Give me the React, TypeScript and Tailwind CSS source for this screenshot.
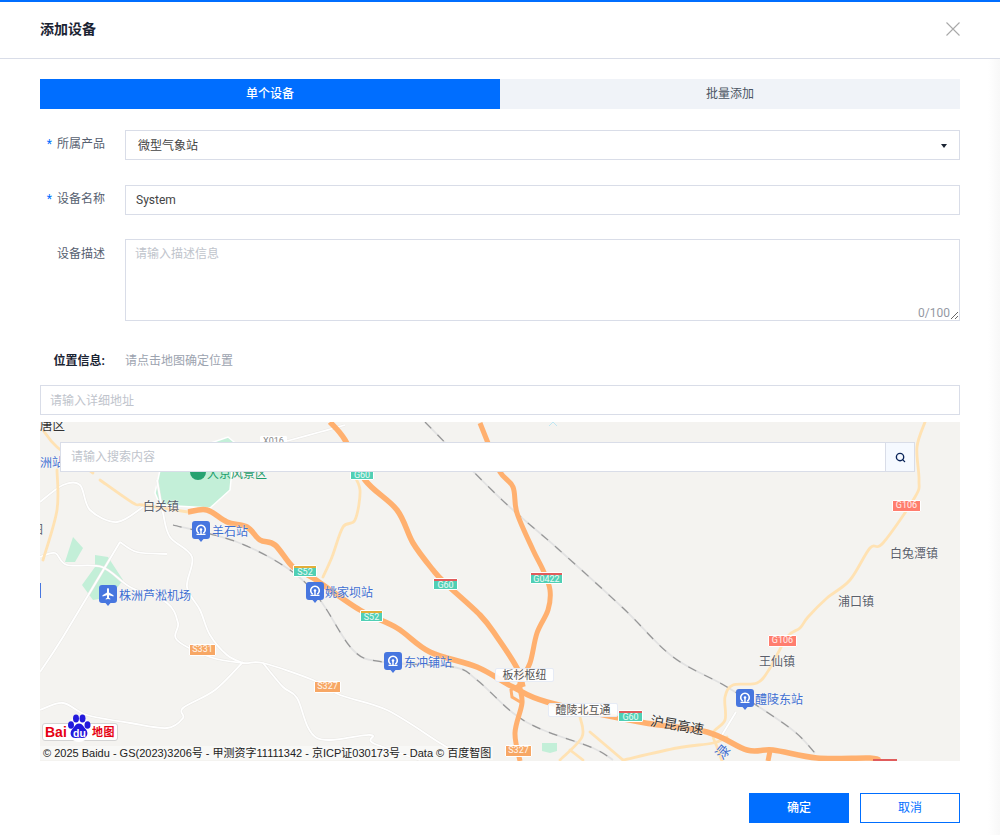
// App.tsx
import { Search } from 'lucide-react';

const roadA = '330,422 345,440 365,480 397,510 413,543 433,570 445,583 480,615 497,637 517,668 523,687';
const roadB =
  '188,512 207,510 227,522 247,527 260,540 275,545 293,567 313,578 360,610 397,628 430,652 477,667 513,687 547,702 640,722 707,732 747,750 773,750 817,758 870,758 880,761';
const roadC =
  '480,423 488,443 500,472 513,487 517,513 533,550 543,570 550,590 548,610 537,633 530,663 520,683 522,703 515,733 520,761';

const paleRoads = [
  '925,422 917,447 919,480 915,497 883,543 870,548 850,580 827,598 808,617 800,628 787,637 770,668 757,683 733,685 725,697 725,720 713,733 717,747 722,761',
  '352,472 360,490 355,520 343,527 332,557 323,577',
  '43,430 57,447 93,473',
  '100,480 133,503 143,505 188,512',
  '57,470 57,510 43,560',
  '623,760 677,748 713,743 727,737',
  '580,717 582,737 560,760',
  '590,732 623,760',
  '570,750 583,760',
];

const whiteRoads = [
  '120,542 63,637 40,672',
  '120,542 137,552 167,554',
  '40,557 55,553 67,565 102,567 130,587 167,603 178,623 177,640 210,657 243,663 263,663 313,680 340,695 387,710 440,743 463,757',
  '157,480 163,513 170,537 192,557 187,587 200,610 210,635 227,655 243,663',
  '243,662 215,690 183,708 183,718 167,728 130,723 87,715 63,703 40,710',
  '263,663 283,687 297,698 317,738 370,735 373,743 420,760',
  '40,502 63,485 80,485 90,510 117,522 143,507',
  '287,441 320,432 345,425',
  '736,712 722,735',
];

const railways = [
  '425,422 500,498 557,548 623,608 673,657 727,687 790,728 815,753',
  '173,525 237,542 290,570 320,600 353,650 383,662 453,667 477,680 513,713 543,730 593,748 613,760',
];

// 把折线点转成平滑曲线
function smooth(points: string) {
  const p = points.split(' ').map((s) => s.split(',').map(Number));
  let d = `M${p[0][0]} ${p[0][1]}`;
  for (let i = 0; i < p.length - 1; i++) {
    const a = p[i - 1] ?? p[i];
    const b = p[i];
    const c = p[i + 1];
    const e = p[i + 2] ?? c;
    const c1x = b[0] + (c[0] - a[0]) / 6;
    const c1y = b[1] + (c[1] - a[1]) / 6;
    const c2x = c[0] - (e[0] - b[0]) / 6;
    const c2y = c[1] - (e[1] - b[1]) / 6;
    d += `C${c1x} ${c1y} ${c2x} ${c2y} ${c[0]} ${c[1]}`;
  }
  return d;
}

const pinPath = 'M3 0h12a3 3 0 0 1 3 3v12a3 3 0 0 1-3 3h-3.500L9 21l-2.500-3H3a3 3 0 0 1-3-3V3a3 3 0 0 1 3-3z';

function StationPin({ className }: { className: string }) {
  return (
    <svg className={`absolute ${className}`} width="18" height="21" viewBox="0 0 18 21">
      <path d={pinPath} fill="#4776df" />
      <path d="M6.700 12.200a4.300 4.300 0 1 1 4.600 0" fill="none" stroke="#fff" strokeWidth="1.600" />
      <circle cx="9" cy="8.500" r="1.300" fill="#fff" />
      <path d="M4.500 13.400h9M9 9v4" stroke="#fff" strokeWidth="1.400" />
    </svg>
  );
}

function PlanePin({ className }: { className: string }) {
  return (
    <svg className={`absolute ${className}`} width="18" height="21" viewBox="0 0 18 21">
      <path d={pinPath} fill="#4776df" />
      <path d="M9 3c.7 0 1 .8 1 1.600V7.600l4.500 2.700v1.200L10 10.200v2.500l1.300 1v.9L9 14l-2.300.6v-.9l1.300-1v-2.500l-4.500 1.300v-1.200L8 7.600V4.600C8 3.800 8.300 3 9 3z" fill="#fff" />
    </svg>
  );
}

function Shield({ label, className, top }: { label: string; className: string; top?: string }) {
  return (
    <div className={`absolute flex flex-col overflow-hidden rounded-[1px] border border-white text-center text-[9px] leading-[9px] text-white/90 ${className}`}>
      {top && <div className={`h-[2px] shrink-0 ${top}`} />}
      <div className="flex-1 truncate">{label}</div>
    </div>
  );
}

const townLabel = 'absolute whitespace-nowrap text-[12px] leading-[14px] text-[#5b5f6b] [text-shadow:0_0_2px_#fff]';
const stationLabel = 'absolute whitespace-nowrap text-[12px] leading-[14px] text-[#3f6fd1] [text-shadow:0_0_2px_#fff]';
const boxLabel =
  'absolute flex items-center justify-center whitespace-nowrap rounded-[2px] border border-[#e6ebf5] bg-white/90 text-[11px] leading-none text-[#555]';

function BaiduMap() {
  return (
    <div className="relative mt-[7px] h-[339px] w-full overflow-hidden bg-[#f4f3f0]">
      <svg className="absolute inset-0 h-full w-full" viewBox="40 422 920 339" fill="none">
        <polygon points="155,493 160,470 185,450 205,445 228,437 240,447 232,470 230,490 210,508 160,505" fill="#c3efd8" stroke="#fff" strokeWidth="1.500" />
        <polygon points="73,537 83,548 75,562 65,562" fill="#c3efd8" />
        <polygon points="95,555 108,557 123,580 110,597 93,600 82,585 95,567" fill="#c3efd8" />
        <polygon points="542,743 557,743 557,751 550,753 542,751" fill="#c3efd8" />
        <path d="M549 426l4-4 4 4" stroke="#bfe6f2" />

        {whiteRoads.map((pts) => (
          <path key={pts} d={smooth(pts)} stroke="#e9e8e5" strokeWidth="2.800" />
        ))}
        {whiteRoads.map((pts) => (
          <path key={pts} d={smooth(pts)} stroke="#ffffff" strokeWidth="1.800" />
        ))}
        {railways.map((pts) => (
          <g key={pts}>
            <path d={smooth(pts)} stroke="#e2e2e2" strokeWidth="1.800" />
            <path d={smooth(pts)} stroke="#959595" strokeWidth="1.200" strokeDasharray="9 9" />
          </g>
        ))}
        {paleRoads.map((pts) => (
          <path key={pts} d={smooth(pts)} stroke="#ffe2b3" strokeWidth="2.800" strokeLinecap="round" />
        ))}
        <path d={smooth(roadA)} stroke="#ffb06f" strokeWidth="5.500" />
        <path d={smooth(roadB)} stroke="#ffb06f" strokeWidth="5.500" />
        <path d={smooth(roadC)} stroke="#ffb06f" strokeWidth="5" />
        <polyline points="520,684 511,690 512,697 522,703" stroke="#ffb06f" strokeWidth="3" />
        <polyline points="770,751 768,761" stroke="#ffb06f" strokeWidth="5" />
        <circle cx="198" cy="472" r="8" fill="#27a271" />
      </svg>

      {/* 区域和地名 */}
      <span className="absolute left-0 top-[-3px] text-[12.500px] leading-[13px] text-[#333] [text-shadow:0_0_2px_#fff]">唐区</span>
      <span className="absolute left-0 top-[34px] text-[12px] leading-[14px] text-[#3f6fd1] [text-shadow:0_0_2px_#fff]">洲站</span>
      <span className="absolute left-[167px] top-[45px] text-[12px] leading-[14px] text-[#1d9d6c]">大京风景区</span>
      <span className={`${townLabel} left-[103px] top-[78px]`}>白关镇</span>
      <span className={`${townLabel} left-[850px] top-[125px]`}>白兔潭镇</span>
      <span className={`${townLabel} left-[798px] top-[173px]`}>浦口镇</span>
      <span className={`${townLabel} left-[719px] top-[233px]`}>王仙镇</span>
      <span className="absolute left-[-9px] top-[101px] text-[12px] leading-[14px] text-[#5b5f6b]">图</span>
      <div className="absolute left-0 top-[161px] h-[15px] w-[1px] bg-[#4776df]" />

      <StationPin className="left-[152px] top-[99px]" />
      <span className={`${stationLabel} left-[172px] top-[103px]`}>羊石站</span>
      <StationPin className="left-[266px] top-[160px]" />
      <span className={`${stationLabel} left-[285px] top-[164px]`}>姚家坝站</span>
      <StationPin className="left-[344px] top-[230px]" />
      <span className={`${stationLabel} left-[364px] top-[234px]`}>东冲铺站</span>
      <StationPin className="left-[696px] top-[267px]" />
      <span className={`${stationLabel} left-[715px] top-[271px]`}>醴陵东站</span>
      <PlanePin className="left-[59px] top-[163px]" />
      <span className={`${stationLabel} left-[79px] top-[167px]`}>株洲芦淞机场</span>

      <div className={`${boxLabel} left-[455px] top-[246px] h-[14px] w-[59px]`}>板杉枢纽</div>
      <div className={`${boxLabel} left-[508px] top-[281px] h-[14px] w-[70px]`}>醴陵北互通</div>
      <span className="absolute left-[610px] top-[296px] rotate-[10deg] whitespace-nowrap text-[13.500px] leading-[15px] text-[#333] [text-shadow:0_0_2px_#fff]">沪昆高速</span>
      <span className="absolute left-[676px] top-[323px] rotate-[-50deg] whitespace-nowrap text-[14px] leading-[14px] text-[#3f6fd1]">渌</span>

      <Shield label="X016" className="left-[220px] top-[14px] h-[12px] w-[27px] border-[#d5d9e0] bg-white !text-[#888]" />
      <Shield label="G60" top="bg-[#e05c5c]" className="left-[310px] top-[46px] h-[12px] w-[24px] bg-[#50cfb4]" />
      <Shield label="S52" top="bg-[#e2ae3b]" className="left-[253px] top-[143px] h-[12px] w-[24px] bg-[#50cfb4]" />
      <Shield label="S52" top="bg-[#e2ae3b]" className="left-[320px] top-[188px] h-[12px] w-[23px] bg-[#50cfb4]" />
      <Shield label="G60" top="bg-[#e05c5c]" className="left-[393px] top-[156px] h-[12px] w-[25px] bg-[#50cfb4]" />
      <Shield label="G0422" top="bg-[#e05c5c]" className="left-[490px] top-[150px] h-[12px] w-[33px] bg-[#50cfb4]" />
      <Shield label="G60" top="bg-[#e05c5c]" className="left-[578px] top-[288px] h-[12px] w-[25px] bg-[#50cfb4]" />
      <Shield label="G106" className="left-[852px] top-[78px] h-[12px] w-[29px] bg-[#ff7d6e]" />
      <Shield label="G106" className="left-[728px] top-[213px] h-[12px] w-[29px] bg-[#ff7d6e]" />
      <Shield label="S331" className="left-[149px] top-[222px] h-[12px] w-[27px] bg-[#f7a765]" />
      <Shield label="S327" className="left-[274px] top-[259px] h-[12px] w-[27px] bg-[#f7a765]" />
      <Shield label="S327" className="left-[465px] top-[323px] h-[12px] w-[27px] bg-[#f7a765]" />
      <div className="absolute left-[833px] top-[337px] h-[2px] w-[24px] bg-[#e05c5c]" />

      {/* 搜索框 */}
      <div className="absolute left-[20px] top-[20px] flex h-[30px] w-[855px] border border-[#d9dde8] bg-white">
        <input
          readOnly
          placeholder="请输入搜索内容"
          className="min-w-0 flex-1 bg-white px-[10px] text-[12px] outline-none placeholder:text-[#c0c4cc]"
        />
        <div className="flex w-[29px] items-center justify-center border-l border-[#d9dde8] bg-[#f5f9ff]">
          <Search size={11} strokeWidth={3} className="text-[#0b2559]" />
        </div>
      </div>

      {/* 百度 logo */}
      <div className="absolute left-[2px] top-[291px] flex h-[29px] w-[76px] items-end">
        <div className="mb-[1px] flex h-[18px] w-full items-center justify-between rounded-[3px] border border-[#d4d4d4] bg-white pl-[2px] pr-[2px]">
          <span className="font-['Liberation_Sans',sans-serif] text-[14px] font-bold leading-none text-[#e60012]">Bai</span>
          <span className="text-[11px] font-bold leading-none tracking-[0.5px] text-[#e60012]">地图</span>
        </div>
        <svg className="absolute left-[25px] top-0" width="24" height="29" viewBox="0 0 24 29">
          <ellipse cx="12" cy="16" rx="11" ry="13" fill="#fff" />
          <ellipse cx="4" cy="12" rx="3" ry="3.800" fill="#2319dc" />
          <ellipse cx="9" cy="5.500" rx="3" ry="4" fill="#2319dc" />
          <ellipse cx="15.500" cy="5.500" rx="3" ry="4" fill="#2319dc" />
          <ellipse cx="20.500" cy="12" rx="3" ry="3.800" fill="#2319dc" />
          <path d="M12 10.500c3.500 0 4.500 3.500 7 6 3 3.500 1 9.500-4.500 8.500-1.500-.3-3.500-.5-5 0-5.500 1-7.500-5-4.500-8.500 2.500-2.500 3.500-6 7-6z" fill="#2319dc" />
        </svg>
        <span className="absolute left-[31px] top-[15px] font-['Liberation_Sans',sans-serif] text-[10.500px] font-bold leading-none text-white">du</span>
      </div>

      {/* 版权 */}
      <div className="absolute bottom-[1px] left-[0px] flex h-[14px] items-center whitespace-nowrap bg-white/40 pl-[3px] pr-[2px] font-['Liberation_Sans','Noto_Sans_CJK_SC',sans-serif] text-[11px] leading-none text-[#222]">
        © 2025 Baidu - GS(2023)3206号 - 甲测资字11111342 - 京ICP证030173号 - Data © 百度智图
      </div>
    </div>
  );
}

export default function App() {
  return (
    <div className="relative h-[835px] w-[1000px] overflow-hidden border-t-2 border-[#006eff] bg-white font-['Roboto','Noto_Sans_CJK_SC',sans-serif] text-[12px] text-[#444]">
      <div className="absolute bottom-0 right-0 top-[57px] w-[12px] bg-gradient-to-r from-white to-[#f8f8f8]" />

      <header className="flex h-[57px] items-center justify-between border-b border-[#d9dde8] px-10 pb-[2px]">
        <h1 className="text-[14px] font-bold text-[#1b2433]">添加设备</h1>
        <svg width="14" height="14" viewBox="0 0 14 14" fill="none" stroke="#a9a9a9" strokeWidth="1.100">
          <path d="M0.500 0.500l13 13M13.500 0.500l-13 13" />
        </svg>
      </header>

      <main className="relative px-10 pt-5">
        <div className="flex h-[30px]">
          <div className="flex flex-1 items-center justify-center bg-[#006eff] font-medium text-white">单个设备</div>
          <div className="flex flex-1 items-center justify-center bg-[#f0f3f8] text-[#4b5563]">批量添加</div>
        </div>

        <div className="mt-[21px] flex h-[30px]">
          <label className="flex w-[65px] shrink-0 items-center justify-end pb-[2px] text-[#566070]">
            <span className="mr-[5px] text-[#006eff]">*</span>所属产品
          </label>
          <div className="ml-5 flex flex-1 items-center justify-between border border-[#d9dde8] pl-3 pr-[12px] pt-[1px]">
            <span>微型气象站</span>
            <span className="h-0 w-0 border-x-[3.500px] border-t-[4px] border-x-transparent border-t-[#1b2433]" />
          </div>
        </div>

        <div className="mt-[25px] flex h-[30px]">
          <label className="flex w-[65px] shrink-0 items-center justify-end pb-[2px] text-[#566070]">
            <span className="mr-[5px] text-[#006eff]">*</span>设备名称
          </label>
          <input
            readOnly
            value="System"
            className="ml-5 min-w-0 flex-1 border border-[#d9dde8] px-[10px] text-[12px] text-[#444] outline-none"
          />
        </div>

        <div className="mt-[24px] flex h-[82px]">
          <label className="w-[65px] shrink-0 pt-[7px] text-right leading-[16px] text-[#566070]">设备描述</label>
          <div className="relative ml-5 flex flex-1">
            <textarea
              readOnly
              placeholder="请输入描述信息"
              className="h-[82px] w-full resize-y border border-[#d9dde8] px-[9px] py-[6px] text-[12px] leading-[16px] outline-none placeholder:text-[#c0c4cc]"
            />
            <span className="absolute bottom-[1px] right-[10px] text-[12px] leading-[14px] text-[#9499a3]">0/100</span>
          </div>
        </div>

        <div className="mt-[29px] flex h-5 items-center pt-[1px]">
          <span className="w-[65px] shrink-0 text-right font-bold text-[#1b2433]">位置信息:</span>
          <span className="ml-5 text-[#9ca3af]">请点击地图确定位置</span>
        </div>

        <input
          readOnly
          placeholder="请输入详细地址"
          className="mt-[15px] block h-[30px] w-full border border-[#d9dde8] px-[9px] pt-[1px] text-[12px] outline-none placeholder:text-[#c0c4cc]"
        />

        <BaiduMap />

        <div className="mt-8 flex justify-end gap-[11px]">
          <button className="h-[30px] w-[100px] bg-[#006eff] font-medium text-white">确定</button>
          <button className="h-[30px] w-[100px] border border-[#006eff] bg-white text-[#006eff]">取消</button>
        </div>
      </main>
    </div>
  );
}
